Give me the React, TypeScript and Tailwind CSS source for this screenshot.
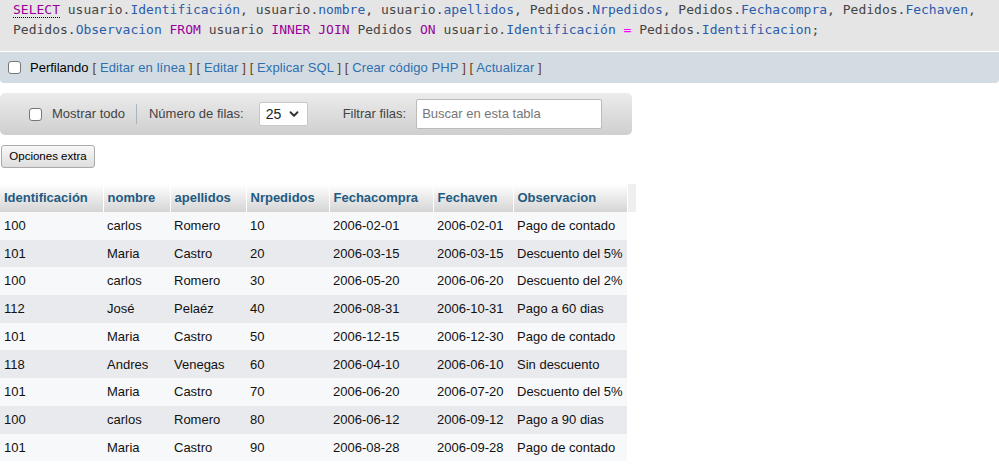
import { ChevronDown } from "lucide-react";

type Pedido = {
  id: string;
  nombre: string;
  apellidos: string;
  nr: string;
  compra: string;
  ven: string;
  obs: string;
};

const rows: Pedido[] = [
  { id: "100", nombre: "carlos", apellidos: "Romero", nr: "10", compra: "2006-02-01", ven: "2006-02-01", obs: "Pago de contado" },
  { id: "101", nombre: "Maria", apellidos: "Castro", nr: "20", compra: "2006-03-15", ven: "2006-03-15", obs: "Descuento del 5%" },
  { id: "100", nombre: "carlos", apellidos: "Romero", nr: "30", compra: "2006-05-20", ven: "2006-06-20", obs: "Descuento del 2%" },
  { id: "112", nombre: "José", apellidos: "Pelaéz", nr: "40", compra: "2006-08-31", ven: "2006-10-31", obs: "Pago a 60 dias" },
  { id: "101", nombre: "Maria", apellidos: "Castro", nr: "50", compra: "2006-12-15", ven: "2006-12-30", obs: "Pago de contado" },
  { id: "118", nombre: "Andres", apellidos: "Venegas", nr: "60", compra: "2006-04-10", ven: "2006-06-10", obs: "Sin descuento" },
  { id: "101", nombre: "Maria", apellidos: "Castro", nr: "70", compra: "2006-06-20", ven: "2006-07-20", obs: "Descuento del 5%" },
  { id: "100", nombre: "carlos", apellidos: "Romero", nr: "80", compra: "2006-06-12", ven: "2006-09-12", obs: "Pago a 90 dias" },
  { id: "101", nombre: "Maria", apellidos: "Castro", nr: "90", compra: "2006-08-28", ven: "2006-09-28", obs: "Pago de contado" },
];

const columns = [
  { label: "Identificación", w: "w-[103px]" },
  { label: "nombre", w: "w-[67px]" },
  { label: "apellidos", w: "w-[76px]" },
  { label: "Nrpedidos", w: "w-[83px]" },
  { label: "Fechacompra", w: "w-[104px]" },
  { label: "Fechaven", w: "w-[80px]" },
  { label: "Observacion", w: "w-[114px]" },
];

function Kw({ children }: { children: string }) {
  return <span className="text-[#990099]">{children}</span>;
}

function Col({ children }: { children: string }) {
  return <span className="text-[#2a5caa]">{children}</span>;
}

function Link({ children }: { children: string }) {
  return <a className="text-[#2f6fae] cursor-pointer">{children}</a>;
}

function Br({ children }: { children: string }) {
  return <span className="text-[#6b3d12]">{children}</span>;
}

export default function App() {
  return (
    <div className="w-[999px] h-[476px] bg-white overflow-hidden font-['Liberation_Sans',Arial,sans-serif] text-[13px] text-[#333]">
      {/* consulta SQL */}
      <div className="h-[51px] bg-[#e5e5e5] pl-[13px] font-['DejaVu_Sans_Mono',monospace] text-[13px] leading-[20px] text-[#444] whitespace-nowrap">
        <span className="text-[#990099] border-b border-dotted border-black">SELECT</span> usuario.<Col>Identificación</Col>, usuario.<Col>nombre</Col>, usuario.<Col>apellidos</Col>, Pedidos.<Col>Nrpedidos</Col>, Pedidos.<Col>Fechacompra</Col>, Pedidos.<Col>Fechaven</Col>,
        <br />
        Pedidos.<Col>Observacion</Col> <Kw>FROM</Kw> usuario <Kw>INNER</Kw> <Kw>JOIN</Kw> Pedidos <Kw>ON</Kw> usuario.<Col>Identificación</Col> <span className="text-[#ff00ff]">=</span> Pedidos.<Col>Identificacion</Col>;
      </div>

      {/* perfilando */}
      <div className="mt-[1px] h-[31px] bg-[#d3dce3] rounded-b-[4px] flex items-center pl-[8px] text-[13px]">
        <span className="w-[13px] h-[13px] rounded-[3px] border border-[#767676] bg-white shrink-0" />
        <span className="ml-[9px] text-black">Perfilando</span>
        <span className="ml-[4px] tracking-[0.1px]">
          <Br>[</Br> <Link>Editar en línea</Link> <Br>]</Br> <Br>[</Br> <Link>Editar</Link> <Br>]</Br> <Br>[</Br> <Link>Explicar SQL</Link> <Br>]</Br> <Br>[</Br> <Link>Crear código PHP</Link> <Br>]</Br> <Br>[</Br> <Link>Actualizar</Link> <Br>]</Br>
        </span>
      </div>

      {/* barra de navegación */}
      <div className="mt-[10px] w-[632px] h-[42px] rounded-[5px] bg-gradient-to-b from-[#ececec] to-[#cfcfcf] flex items-center text-[#444]">
        <span className="ml-[29px] w-[13px] h-[13px] rounded-[3px] border border-[#767676] bg-white shrink-0" />
        <span className="ml-[10px]">Mostrar todo</span>
        <span className="ml-[11px] w-px h-[20px] bg-[#aab4be]" />
        <span className="ml-[12px]">Número de filas:</span>
        <div className="ml-[15px] w-[49px] h-[24px] bg-white border border-[#c8c8c8] rounded-[2px] flex items-center justify-between px-[6px] text-[#222]">
          <span className="text-[14px]">25</span>
          <ChevronDown size={14} strokeWidth={3.2} className="text-[#333]" />
        </div>
        <span className="ml-[35px]">Filtrar filas:</span>
        <div className="ml-[10px] w-[186px] h-[30px] bg-white border border-[#bbb] rounded-[2px] flex items-center px-[5px] text-[#777]">
          Buscar en esta tabla
        </div>
      </div>

      {/* opciones extra */}
      <button className="mt-[10px] ml-[1px] h-[23px] w-[94px] rounded-[3px] border border-[#aaa] bg-gradient-to-b from-[#f8f8f8] to-[#dedede] text-[11.5px] text-black flex items-center justify-center">
        Opciones extra
      </button>

      {/* resultados */}
      <table className="mt-[16px] border-collapse table-fixed">
        <thead>
          <tr>
            {columns.map((c) => (
              <th
                key={c.label}
                className={`${c.w} h-[28px] p-0 pl-[4px] text-left font-bold text-[#235a81] bg-gradient-to-b from-white to-[#d4d4d4] border-r border-white last:border-r-0`}
              >
                {c.label}
              </th>
            ))}
            <th className="w-[9px] p-0 bg-[#efefef]" />
          </tr>
        </thead>
        <tbody>
          {rows.map((r, i) => (
            <tr key={r.nr} className={i % 2 === 0 ? "bg-[#f7f8fa]" : "bg-[#e9eaed]"}>
              {[r.id, r.nombre, r.apellidos, r.nr, r.compra, r.ven, r.obs].map((v, j) => (
                <td key={j} className="h-[27.7px] p-0 pl-[4px] text-[#111] whitespace-nowrap">
                  {v}
                </td>
              ))}
            </tr>
          ))}
        </tbody>
      </table>
    </div>
  );
}
